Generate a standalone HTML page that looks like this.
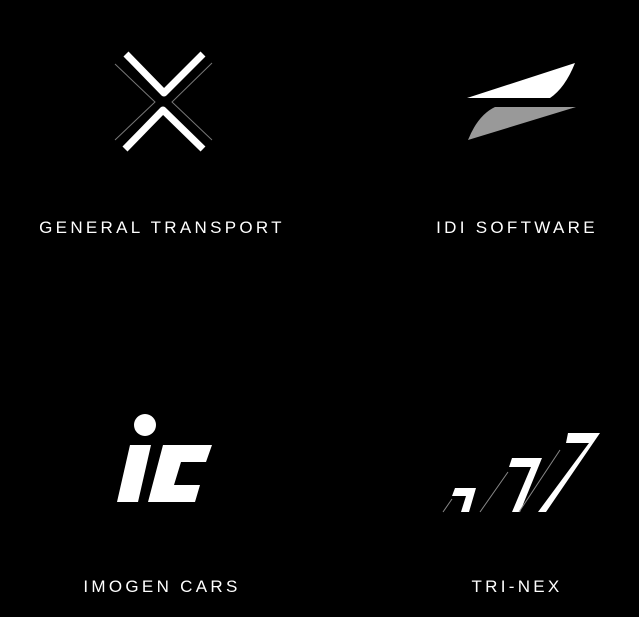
<!DOCTYPE html>
<html><head><meta charset="utf-8"><style>
html,body{margin:0;padding:0;background:#000;width:639px;height:617px;overflow:hidden}
svg{position:absolute;left:0;top:0}
.l{position:absolute;color:#fff;font-family:"Liberation Sans",sans-serif;font-size:17px;letter-spacing:3.3px;white-space:nowrap;transform:translateX(-50%)}
</style></head><body>
<svg width="639" height="617" viewBox="0 0 639 617">
<g stroke="#777" stroke-width="1" fill="none">
<polyline points="115,64 155,102 115,140"/>
<polyline points="212,63 172,102 212,140"/>
</g>
<g stroke="#fff" stroke-width="7" fill="none" stroke-linejoin="round">
<polyline points="126,54 164,93 203,54"/>
<polyline points="125,149 163,110 203,149"/>
</g>
<path d="M467,98 L575,63 Q565,88 550,98 Z" fill="#fff"/>
<path d="M468,140 Q478,115 495,107 L576,107 Z" fill="#999"/>
<circle cx="145" cy="425" r="11" fill="#fff"/>
<polygon points="130,445 151,445 138,502 117,502" fill="#fff"/>
<polygon points="163,445 212,445 206,462 181,462 174,485 200,485 195,502 148,502" fill="#fff"/>
<g fill="#fff">
<polygon points="455,488 476,488 469,512 461,512 466,496 452,496"/>
<polygon points="512,458 542,458 520,512 512,512 531,467 509,467"/>
<polygon points="568,433 600,433 546,512 538,512 589,443 566,443"/>
</g>
<g stroke="#888" stroke-width="1">
<line x1="443" y1="512" x2="452" y2="499"/>
<line x1="480" y1="512" x2="508" y2="472"/>
<line x1="519" y1="512" x2="560" y2="450"/>
</g>
</svg>
<div class="l" style="left:162px;top:218px">GENERAL TRANSPORT</div>
<div class="l" style="left:517px;top:218px">IDI SOFTWARE</div>
<div class="l" style="left:162px;top:577px">IMOGEN CARS</div>
<div class="l" style="left:517px;top:577px">TRI-NEX</div>
</body></html>
